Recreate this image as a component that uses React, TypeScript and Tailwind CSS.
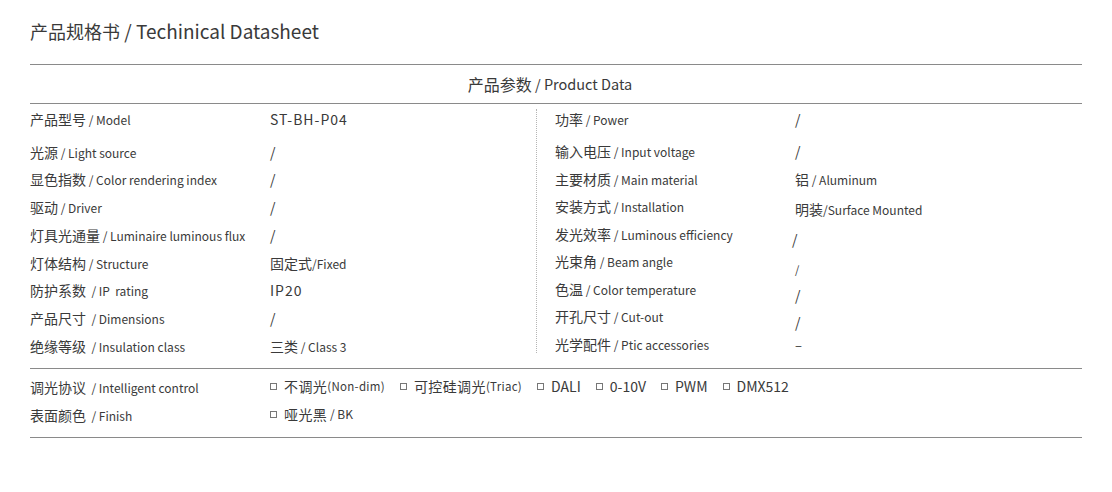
import React from 'react';

type Row = { zh: string; en: string; value: React.ReactNode; drop?: string };

const V = ({ zh, en }: { zh?: string; en?: string }) => (
  <span className="whitespace-pre">
    {zh && <span className="text-[14px]">{zh}</span>}
    {en && <span className="text-[12px]">{en}</span>}
  </span>
);

const Slash = () => <span className="text-[14px]">/</span>;

const leftRows: Row[] = [
  { zh: '产品型号', en: ' / Model', value: <span className="text-[14px] tracking-[1px]">ST-BH-P04</span> },
  { zh: '光源', en: ' / Light source', value: <Slash /> },
  { zh: '显色指数', en: ' / Color rendering index', value: <Slash /> },
  { zh: '驱动', en: ' / Driver', value: <Slash /> },
  { zh: '灯具光通量', en: ' / Luminaire luminous flux', value: <Slash /> },
  { zh: '灯体结构', en: ' / Structure', value: <V zh="固定式" en="/Fixed" /> },
  { zh: '防护系数', en: '  / IP  rating', value: <span className="text-[14px] tracking-[1px]">IP20</span> },
  { zh: '产品尺寸', en: '  / Dimensions', value: <Slash /> },
  { zh: '绝缘等级', en: '  / Insulation class', value: <V zh="三类" en=" / Class 3" /> },
];

const rightRows: Row[] = [
  { zh: '功率', en: ' / Power', value: <Slash /> },
  { zh: '输入电压', en: ' / Input voltage', value: <Slash /> },
  { zh: '主要材质', en: ' / Main material', value: <V zh="铝" en=" / Aluminum" /> },
  { zh: '安装方式', en: ' / Installation', value: <V zh="明装" en="/Surface Mounted" />, drop: 'mt-[6px]' },
  { zh: '发光效率', en: ' / Luminous efficiency', value: <Slash />, drop: 'mt-[10px] -ml-[3px]' },
  { zh: '光束角', en: ' / Beam angle', value: <span className="text-[11px]">/</span>, drop: 'mt-[14px]' },
  { zh: '色温', en: ' / Color temperature', value: <Slash />, drop: 'mt-[12px]' },
  { zh: '开孔尺寸', en: ' / Cut-out', value: <Slash />, drop: 'mt-[12px]' },
  { zh: '光学配件', en: ' / Ptic accessories', value: <span className="text-[13px]">–</span> },
];

function Label({ zh, en }: { zh: string; en: string }) {
  return (
    <span className="whitespace-pre">
      <span className="text-[14px]">{zh}</span>
      <span className="text-[12px]">{en}</span>
    </span>
  );
}

function SpecRow({ row, first, h }: { row: Row; first: boolean; h: string }) {
  return (
    <div className={`flex items-center ${h} ${first ? 'mb-[5px]' : ''}`}>
      <div className="w-[240px] shrink-0">
        <Label zh={row.zh} en={row.en} />
      </div>
      <div className={row.drop ?? ''}>{row.value}</div>
    </div>
  );
}

function Box() {
  return <span className="inline-block w-[7px] h-[7px] border border-[#777] mr-[7px]" />;
}

function Option({ zh, en, tight }: { zh?: string; en?: string; tight?: boolean }) {
  return (
    <span className="flex items-center whitespace-pre">
      <Box />
      {zh && <span className="text-[14px] tracking-[0.4px]">{zh}</span>}
      {en && <span className={tight ? 'text-[11.5px] tracking-[0.3px]' : 'text-[14px]'}>{en}</span>}
    </span>
  );
}

export default function App() {
  return (
    <div className="w-[1112px] h-[492px] bg-white text-[#3a3a3a] font-['Noto_Sans_CJK_SC','Noto_Sans',sans-serif] px-[30px] pt-[18px]">
      <h1 className="text-[18px] leading-[26px] whitespace-pre">
        产品规格书<span className="text-[19px]"> / Techinical Datasheet</span>
      </h1>

      <div className="mt-[20px] border-t border-[#8a8a8a]" />
      <div className="h-[38px] flex items-center justify-center pr-[12px] whitespace-pre">
        <span className="text-[16px]">产品参数</span>
        <span className="text-[14.5px]"> / Product Data</span>
      </div>
      <div className="border-t border-[#8a8a8a]" />

      <div className="flex pt-0 pb-[9px]">
        <div className="w-[506px] shrink-0">
          {leftRows.map((r, i) => (
            <SpecRow key={r.zh} row={r} first={i === 0} h="h-[27.75px]" />
          ))}
        </div>
        <div className="border-l border-dotted border-[#b5b5b5] mt-[5px] mb-[6px]" />
        <div className="pl-[18px] flex-1">
          {rightRows.map((r, i) => (
            <SpecRow key={r.zh} row={r} first={i === 0} h="h-[27.5px]" />
          ))}
        </div>
      </div>

      <div className="border-t border-[#8a8a8a]" />
      <div className="pt-[3px] pb-[9px]">
        <div className="flex items-center h-[28px]">
          <div className="w-[240px] shrink-0">
            <Label zh="调光协议" en="  / Intelligent control" />
          </div>
          <div className="flex items-center gap-[15px] mt-[2px]">
            <Option zh="不调光" en="(Non-dim)" tight />
            <Option zh="可控硅调光" en="(Triac)" tight />
            <Option en="DALI" />
            <Option en="0-10V" />
            <Option en="PWM" />
            <Option en="DMX512" />
          </div>
        </div>
        <div className="flex items-center h-[28px]">
          <div className="w-[240px] shrink-0">
            <Label zh="表面颜色" en="  / Finish" />
          </div>
          <span className="flex items-center whitespace-pre mt-[1px]">
            <Box />
            <span className="text-[14px] tracking-[0.4px]">哑光黑</span>
            <span className="text-[12px]"> / BK</span>
          </span>
        </div>
      </div>
      <div className="border-t border-[#8a8a8a]" />
    </div>
  );
}
